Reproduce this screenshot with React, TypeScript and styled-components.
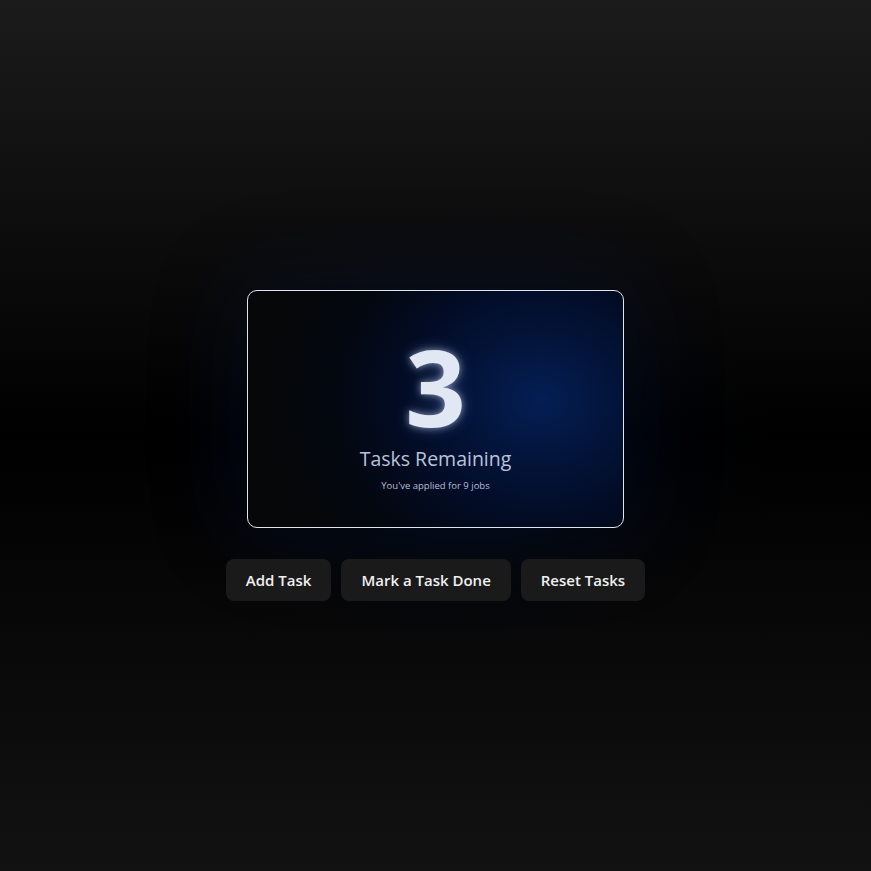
import React, { useState } from 'react'
import styled, { createGlobalStyle } from 'styled-components'

const GlobalStyle = createGlobalStyle`
  html, body {
    margin: 0;
    padding: 0;
  }
  body {
    font-family: "Open Sans", "Noto Sans", Arial, sans-serif;
    color: rgba(255, 255, 255, 0.87);
    background: linear-gradient(180deg, #1b1b1b 0%, #000000 50%, #121212 100%);
    min-height: 100vh;
  }
`

const Page = styled.main`
  min-height: 100vh;
  box-sizing: border-box;
  padding-top: 20px;
  display: flex;
  flex-direction: column;
  align-items: center;
  justify-content: center;
  gap: 31px;
  background: radial-gradient(ellipse 300px 230px at 470px 440px, rgba(0, 26, 75, 0.3) 0%, rgba(0, 16, 45, 0.12) 55%, rgba(0, 0, 0, 0) 100%);
`

const Card = styled.section`
  width: 377px;
  height: 238px;
  box-sizing: border-box;
  padding-top: 42px;
  border: 1px solid #dfe5f0;
  border-radius: 10px;
  display: flex;
  flex-direction: column;
  align-items: center;
  background-color: #050709;
  background-image: radial-gradient(ellipse 270px 230px at 78% 46%, #041e54 0%, #03163f 22%, #020c26 50%, #03070f 78%, #050709 100%);
  box-shadow: 0 0 90px 10px rgba(0, 30, 90, 0.22);
`

const Count = styled.div`
  font-size: 106px;
  font-weight: 700;
  line-height: 106px;
  height: 106px;
  color: #e2e7f4;
  text-shadow: 0 0 7px rgba(220, 230, 255, 0.55), 0 0 16px rgba(160, 190, 255, 0.3);
`

const Label = styled.h2`
  margin: 8px 0 0;
  font-size: 19.5px;
  font-weight: 400;
  line-height: 24px;
  color: #b9c4dc;
`

const Sub = styled.p`
  margin: 8px 0 0;
  font-size: 9.5px;
  line-height: 14px;
  color: #b3bfd8;
`

const Actions = styled.div`
  display: flex;
  gap: 10px;
`

const Button = styled.button`
  height: 42px;
  padding: 0 19px;
  border: 1px solid transparent;
  border-radius: 8px;
  background: #1a1a1a;
  color: #f0f0f0;
  font-family: inherit;
  font-size: 15px;
  font-weight: 600;
  cursor: pointer;
`

export default function App() {
  const [tasks, setTasks] = useState(3)
  const applied = 9

  return (
    <>
      <GlobalStyle />
      <Page>
        <Card>
          <Count>{tasks}</Count>
          <Label>Tasks Remaining</Label>
          <Sub>You've applied for {applied} jobs</Sub>
        </Card>
        <Actions>
          <Button onClick={() => setTasks(tasks + 1)}>Add Task</Button>
          <Button onClick={() => setTasks(Math.max(0, tasks - 1))}>Mark a Task Done</Button>
          <Button onClick={() => setTasks(0)}>Reset Tasks</Button>
        </Actions>
      </Page>
    </>
  )
}
